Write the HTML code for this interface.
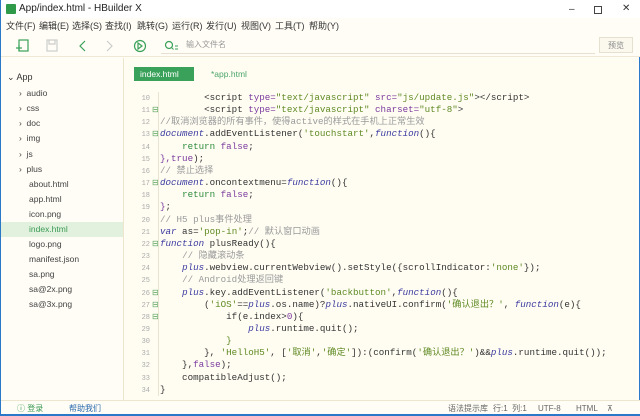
<!DOCTYPE html>
<html><head><meta charset="utf-8"><style>
*{margin:0;padding:0;box-sizing:border-box}
body{width:640px;height:416px;overflow:hidden;background:#fffdf5;font-family:"Liberation Sans","Noto Sans CJK SC",sans-serif;font-size:9px;color:#333;position:relative;border-left:1px solid #2b78c8;border-right:1px solid #2b78c8}
.title{position:absolute;left:0;top:0;width:640px;height:18px;background:#fff;font-size:10px;line-height:18px;padding-left:18px;color:#222}
.logo{position:absolute;left:5px;top:4px;width:10px;height:10px;background:#2f9b4a;border-radius:1px}
.wc{position:absolute;top:0;font-size:10px;color:#333}
.menu{position:absolute;left:0;top:18px;width:640px;height:17px;background:#fffdf5;font-size:9px;line-height:17px}
.menu span{position:absolute}
.tb{position:absolute;left:0;top:35px;width:640px;height:22px;background:#fffdf5;border-bottom:1px solid #eee8d5}
.search{position:absolute;left:160px;top:36px;width:434px;height:18px;border-bottom:1px solid #e5e0cf;font-size:8px;color:#999;line-height:18px;padding-left:25px}
.pv{position:absolute;left:598px;top:37px;width:34px;height:16px;border:1px solid #e5e0d0;background:#fbf8ee;color:#888;font-size:8px;text-align:center;line-height:15px}
.side{position:absolute;left:0;top:58px;width:123px;height:342px;background:#fffdf5;border-right:1px solid #eee6cc}
.side div{position:absolute;font-size:8.5px;color:#444}
.sel{background:#e2f1dd;width:122px;height:15px}
.ed{position:absolute;left:124px;top:58px;width:512px;height:342px;background:#fffdf2}
.tab1{position:absolute;left:133px;top:67px;width:60px;height:14px;background:#3aa15b;color:#fff;font-size:8.5px;line-height:14px;padding-left:6px}
.tab2{position:absolute;left:210px;top:67px;font-size:8.5px;line-height:14px;color:#4aa56a}
.code{position:absolute;left:117px;top:92px;font-family:"Liberation Mono","Noto Sans CJK SC",monospace;font-size:9.2px;white-space:pre;color:#333}
.code div{height:12.17px;line-height:12px;overflow:visible}
.ln{display:inline-block;width:34px;text-align:right;color:#aaa;font-size:7px;padding-right:2px}
.fd{display:inline-block;width:8px;color:#5aa45e;font-size:8px}
.k{color:#7b3a9e}.s{color:#5f8a24}.c{color:#9a9a9a}.i{color:#3b3ba0;font-style:italic}.g{color:#2e8b3e}
.status{position:absolute;left:0;top:400px;width:640px;height:16px;background:#fffdf5;border-top:1px solid #ece6d0;font-size:8px;line-height:15px}
.status span{position:absolute}
.bottom{position:absolute;left:0;top:414px;width:640px;height:2px;background:#2b78c8}
.vl{position:absolute;left:157px;top:92px;width:1px;height:304px;background:#e9e4d2}
</style></head><body>
<div class="title"><div class="logo"></div>App/index.html - HBuilder X</div>
<span class="wc" style="left:568px;top:4px">–</span><span class="wc" style="left:593px;width:8px;height:8px;border:1px solid #444;top:6px"></span><span class="wc" style="left:621px;top:3px">✕</span>
<div class="menu"><span style="left:5px">文件(F)</span><span style="left:38px">编辑(E)</span><span style="left:71px">选择(S)</span><span style="left:104px">查找(I)</span><span style="left:136px">跳转(G)</span><span style="left:171px">运行(R)</span><span style="left:205px">发行(U)</span><span style="left:240px">视图(V)</span><span style="left:274px">工具(T)</span><span style="left:308px">帮助(Y)</span></div>
<div class="tb"></div>
<svg style="position:absolute;left:0;top:36px" width="160" height="20"><g fill="none" stroke-width="1.2">
<rect x="18" y="4" width="9" height="11" stroke="#3aa15b"/><path d="M15 12h6M18 9v6" stroke="#3aa15b"/>
<rect x="46" y="4" width="10" height="11" stroke="#ccc"/><path d="M48 4v4h6V4" stroke="#ccc"/>
<path d="M84 5l-5 5 5 5" stroke="#3aa15b"/><path d="M106 5l5 5-5 5" stroke="#ccc"/>
<circle cx="139" cy="10" r="5.5" stroke="#3aa15b"/><path d="M137 7v6l4-3z" stroke="#3aa15b"/>
</g></svg>
<div class="search">输入文件名</div>
<svg style="position:absolute;left:163px;top:40px" width="16" height="12"><circle cx="5" cy="5" r="3.5" fill="none" stroke="#3aa15b" stroke-width="1.2"/><path d="M7.5 7.5l2 2M11 6h3M11 9h3" stroke="#3aa15b"/></svg>
<div class="pv">预览</div>
<div class="side">
<div style="left:6px;top:14px;font-size:9px;color:#333">⌄ App</div>
<div style="left:18px;top:30px">›&nbsp; audio</div>
<div style="left:18px;top:45px">›&nbsp; css</div>
<div style="left:18px;top:60px">›&nbsp; doc</div>
<div style="left:18px;top:75px">›&nbsp; img</div>
<div style="left:18px;top:91px">›&nbsp; js</div>
<div style="left:18px;top:106px">›&nbsp; plus</div>
<div style="left:28px;top:121px">about.html</div>
<div style="left:28px;top:136px">app.html</div>
<div style="left:28px;top:151px">icon.png</div>
<div class="sel" style="left:0;top:164px"></div>
<div style="left:28px;top:166px;color:#3a9a55">index.html</div>
<div style="left:28px;top:181px">logo.png</div>
<div style="left:28px;top:196px">manifest.json</div>
<div style="left:28px;top:211px">sa.png</div>
<div style="left:28px;top:226px">sa@2x.png</div>
<div style="left:28px;top:241px">sa@3x.png</div>
</div>
<div class="ed"></div>
<div class="tab1">index.html</div><div class="tab2">*app.html</div>
<div class="vl"></div>
<div class="code"><div><span class="ln">10</span><span class="fd"> </span>        &lt;script <span class="k">type=</span><span class="s">"text/javascript"</span> <span class="k">src=</span><span class="s">"js/update.js"</span>&gt;&lt;/script&gt;</div><div><span class="ln">11</span><span class="fd">⊟</span>        &lt;script <span class="k">type=</span><span class="s">"text/javascript"</span> <span class="k">charset=</span><span class="s">"utf-8"</span>&gt;</div><div><span class="ln">12</span><span class="fd"> </span><span class="c">//取消浏览器的所有事件，使得active的样式在手机上正常生效</span></div><div><span class="ln">13</span><span class="fd">⊟</span><span class="i">document</span>.addEventListener(<span class="s">'touchstart'</span>,<span class="i">function</span>(){</div><div><span class="ln">14</span><span class="fd"> </span>    <span class="g">return</span> <span class="k">false</span>;</div><div><span class="ln">15</span><span class="fd"> </span><span class="k">},true</span>);</div><div><span class="ln">16</span><span class="fd"> </span><span class="c">// 禁止选择</span></div><div><span class="ln">17</span><span class="fd">⊟</span><span class="i">document</span>.oncontextmenu=<span class="i">function</span>(){</div><div><span class="ln">18</span><span class="fd"> </span>    <span class="g">return</span> <span class="k">false</span>;</div><div><span class="ln">19</span><span class="fd"> </span><span class="k">}</span>;</div><div><span class="ln">20</span><span class="fd"> </span><span class="c">// H5 plus事件处理</span></div><div><span class="ln">21</span><span class="fd"> </span><span class="i">var</span> as=<span class="s">'pop-in'</span>;<span class="c">// 默认窗口动画</span></div><div><span class="ln">22</span><span class="fd">⊟</span><span class="i">function</span> plusReady(){</div><div><span class="ln">23</span><span class="fd"> </span>    <span class="c">// 隐藏滚动条</span></div><div><span class="ln">24</span><span class="fd"> </span>    <span class="i">plus</span>.webview.currentWebview().setStyle({scrollIndicator:<span class="s">'none'</span>});</div><div><span class="ln">25</span><span class="fd"> </span>    <span class="c">// Android处理返回键</span></div><div><span class="ln">26</span><span class="fd">⊟</span>    <span class="i">plus</span>.key.addEventListener(<span class="s">'backbutton'</span>,<span class="i">function</span>(){</div><div><span class="ln">27</span><span class="fd">⊟</span>        (<span class="s">'iOS'</span>==<span class="i">plus</span>.os.name)?<span class="i">plus</span>.nativeUI.confirm(<span class="s">'确认退出？'</span>, <span class="i">function</span>(e){</div><div><span class="ln">28</span><span class="fd">⊟</span>            if(e.index&gt;<span class="k">0</span>){</div><div><span class="ln">29</span><span class="fd"> </span>                <span class="i">plus</span>.runtime.quit();</div><div><span class="ln">30</span><span class="fd"> </span>            <span class="s">}</span></div><div><span class="ln">31</span><span class="fd"> </span>        }, <span class="s">'HelloH5'</span>, [<span class="s">'取消'</span>,<span class="s">'确定'</span>]):(confirm(<span class="s">'确认退出？'</span>)&amp;&amp;<span class="i">plus</span>.runtime.quit());</div><div><span class="ln">32</span><span class="fd"> </span>    },<span class="k">false</span>);</div><div><span class="ln">33</span><span class="fd"> </span>    compatibleAdjust();</div><div><span class="ln">34</span><span class="fd"> </span>}</div></div>
<div class="status"><span style="left:16px;color:#3a9a55">ⓘ 登录</span><span style="left:68px;color:#2a6ab0">帮助我们</span><span style="left:447px;color:#666">语法提示库</span><span style="left:492px;color:#666">行:1&nbsp; 列:1</span><span style="left:537px;color:#666">UTF-8</span><span style="left:575px;color:#666">HTML</span><span style="left:606px;color:#666">⊼</span></div>
<div class="bottom"></div>
</body></html>
